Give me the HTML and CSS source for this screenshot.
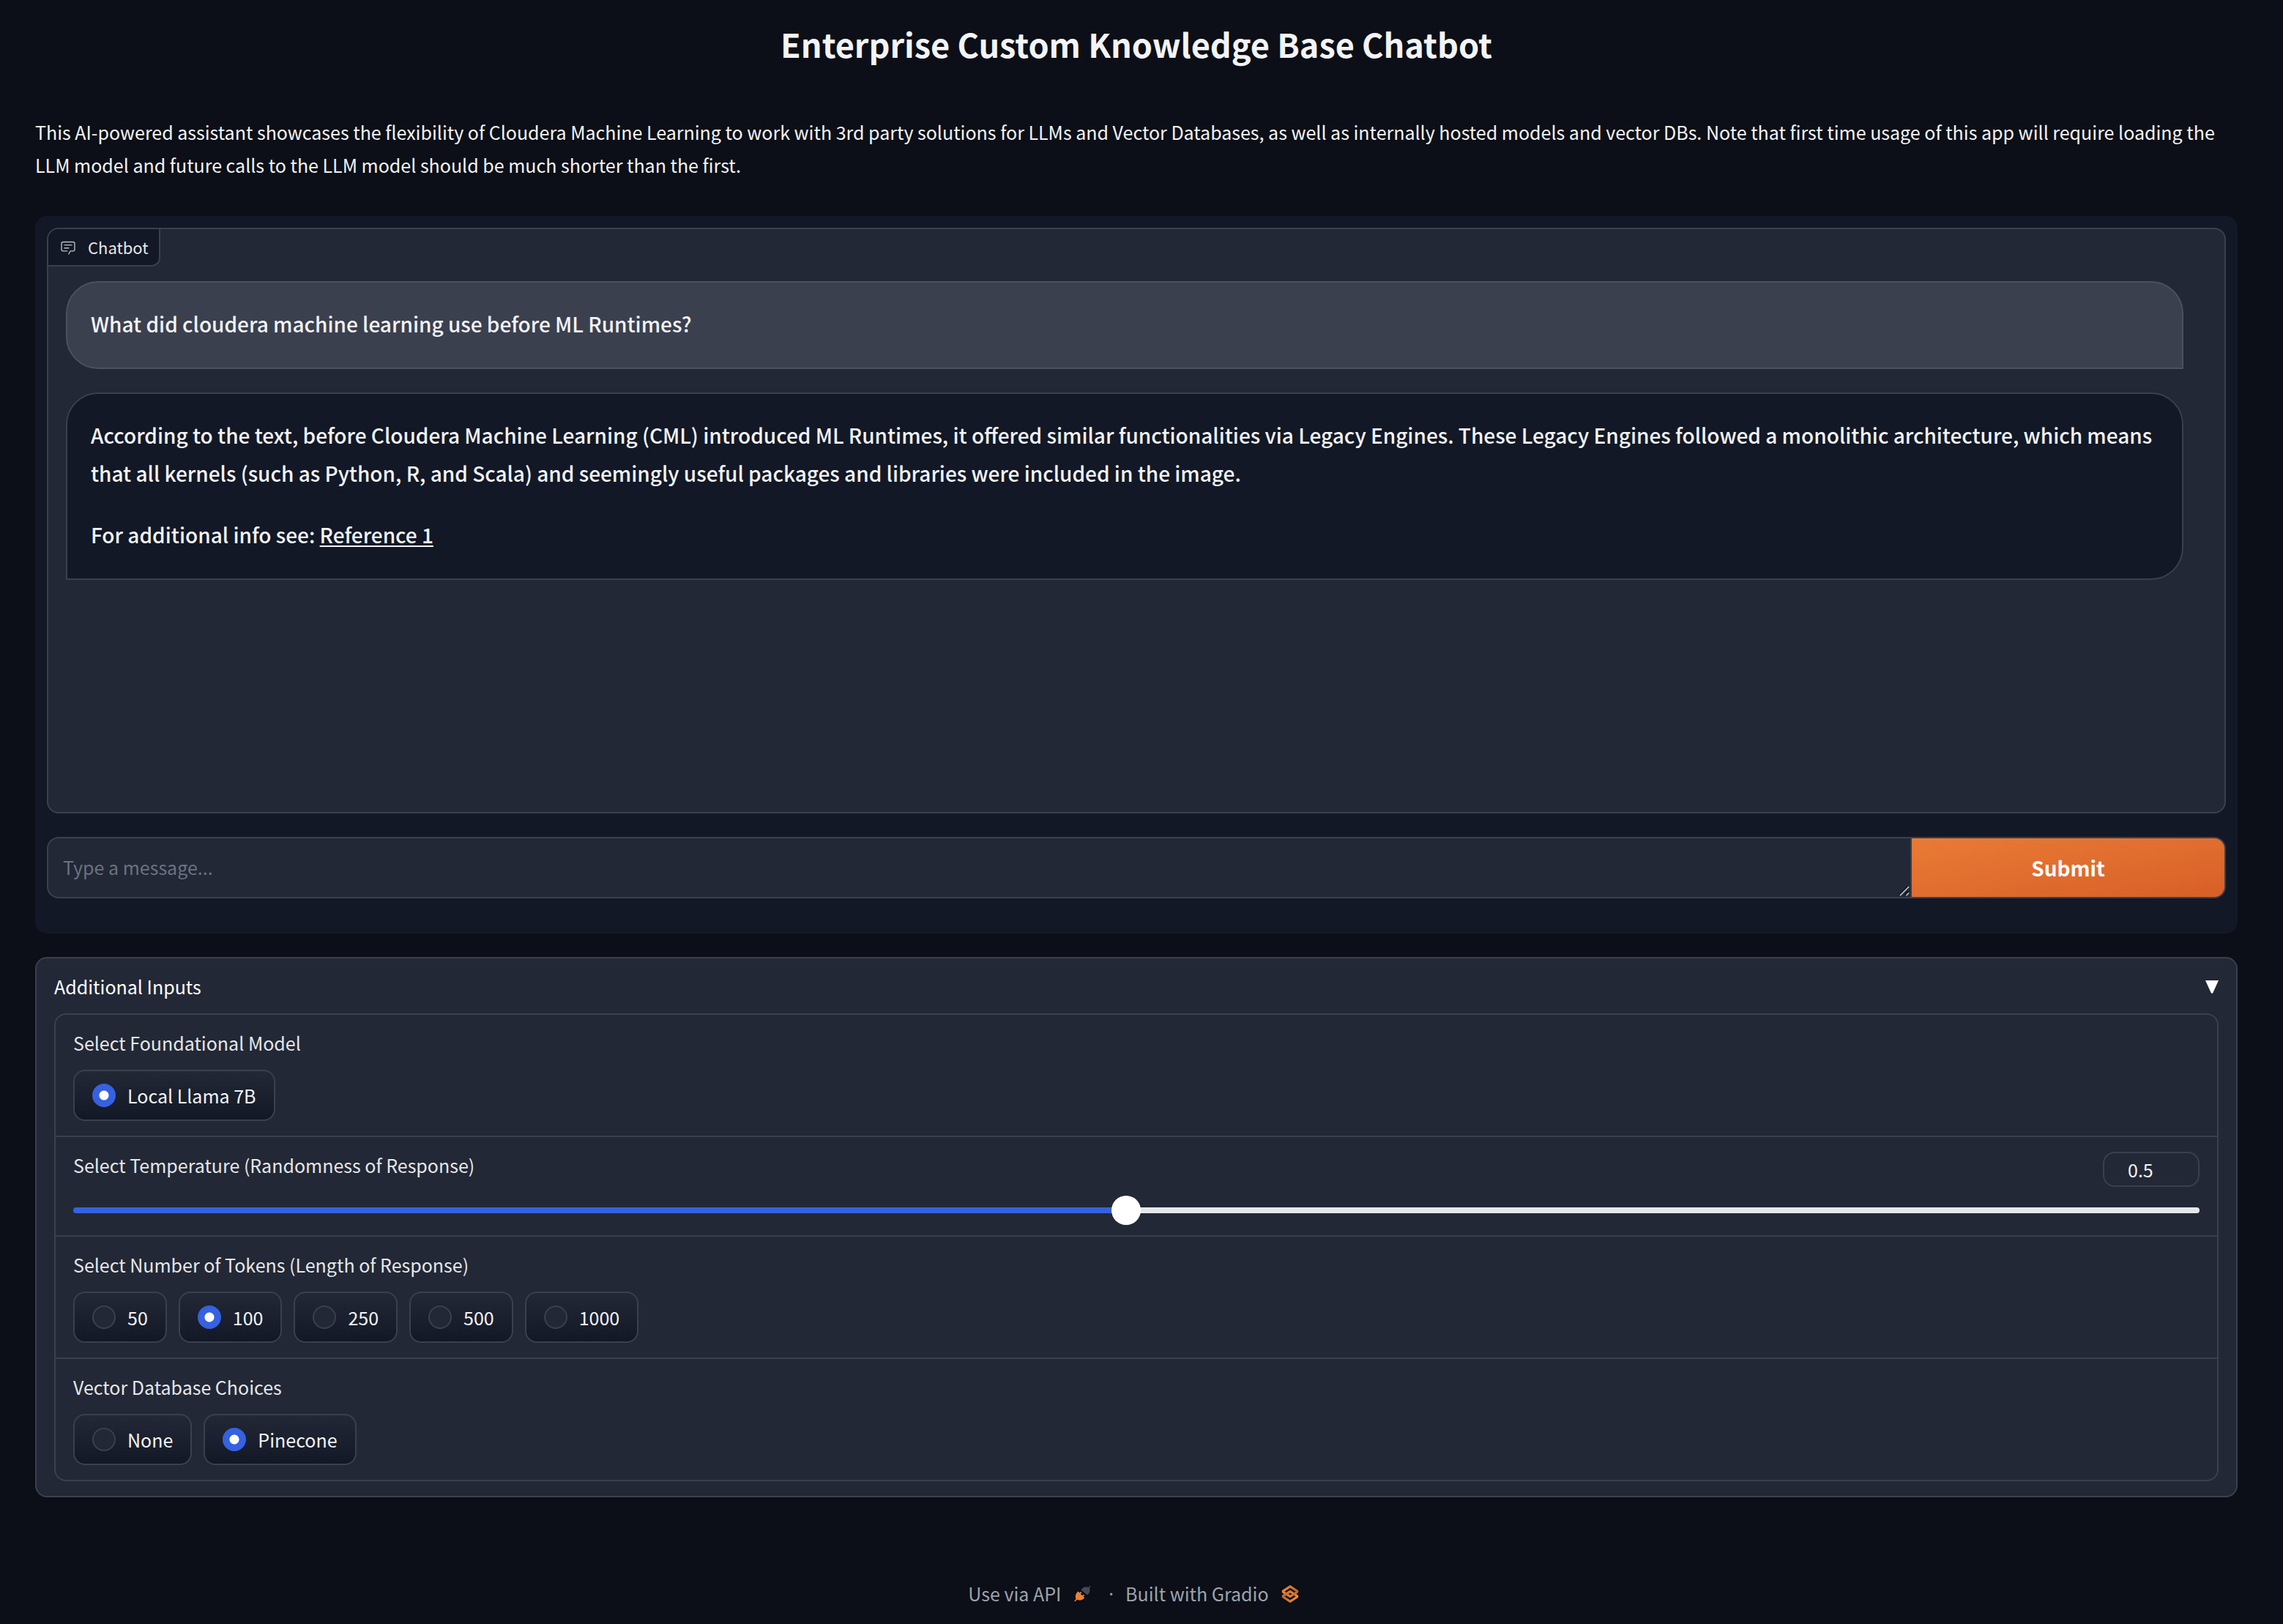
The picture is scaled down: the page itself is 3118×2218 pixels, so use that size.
FILE: index.html
```html
<!DOCTYPE html>
<html lang="en">
<head>
<meta charset="utf-8">
<meta name="viewport" content="width=device-width, initial-scale=1">
<title>Enterprise Custom Knowledge Base Chatbot</title>
<link rel="stylesheet" href="styles.css">
</head>
<body>
<main class="app">
  <h1 class="title">Enterprise Custom Knowledge Base Chatbot</h1>
  <p class="intro">This AI-powered assistant showcases the flexibility of Cloudera Machine Learning to work with 3rd party solutions for LLMs and Vector Databases, as well as internally hosted models and vector DBs. Note that first time usage of this app will require loading the LLM model and future calls to the LLM model should be much shorter than the first.</p>

  <section class="chat-panel">
    <div class="chatbot">
      <div class="block-label">
        <svg class="label-icon" viewBox="0 0 32 32" aria-hidden="true"><path fill="currentColor" d="M17.74 30L16 29l4-7h6a2 2 0 0 0 2-2V8a2 2 0 0 0-2-2H6a2 2 0 0 0-2 2v12a2 2 0 0 0 2 2h9v2H6a4 4 0 0 1-4-4V8a4 4 0 0 1 4-4h20a4 4 0 0 1 4 4v12a4 4 0 0 1-4 4h-4.84Z"/><path fill="currentColor" d="M8 10h16v2H8zm0 6h10v2H8z"/></svg>
        <span>Chatbot</span>
      </div>
      <div class="messages">
        <div class="message user"><p>What did cloudera machine learning use before ML Runtimes?</p></div>
        <div class="message bot">
          <p>According to the text, before Cloudera Machine Learning (CML) introduced ML Runtimes, it offered similar functionalities via Legacy Engines. These Legacy Engines followed a monolithic architecture, which means that all kernels (such as Python, R, and Scala) and seemingly useful packages and libraries were included in the image.</p>
          <p>For additional info see: <a href="#">Reference 1</a></p>
        </div>
      </div>
    </div>
    <form class="composer">
      <textarea class="composer-text" rows="1" placeholder="Type a message..." aria-label="Message"></textarea>
      <button class="submit" type="button">Submit</button>
    </form>
  </section>

  <section class="accordion">
    <button class="accordion-head" type="button" aria-expanded="true">
      <span>Additional Inputs</span>
      <svg class="caret" viewBox="0 0 18 18" aria-hidden="true"><path d="M0 0h18l-7.500 16.500q-1.500 2.500-3 0z" fill="#fff"/></svg>
    </button>
    <div class="fields">
      <fieldset class="field">
        <legend class="field-label">Select Foundational Model</legend>
        <div class="options">
          <label class="option"><input type="radio" name="model" checked><span>Local Llama 7B</span></label>
        </div>
      </fieldset>
      <div class="field">
        <div class="field-head">
          <label class="field-label" for="temperature">Select Temperature (Randomness of Response)</label>
          <input class="number" type="number" value="0.5" min="0.01" max="1" step="0.01" aria-label="Temperature value">
        </div>
        <input class="slider" id="temperature" type="range" value="0.5" min="0.01" max="1" step="0.01">
      </div>
      <fieldset class="field">
        <legend class="field-label">Select Number of Tokens (Length of Response)</legend>
        <div class="options">
          <label class="option"><input type="radio" name="tokens"><span>50</span></label>
          <label class="option"><input type="radio" name="tokens" checked><span>100</span></label>
          <label class="option"><input type="radio" name="tokens"><span>250</span></label>
          <label class="option"><input type="radio" name="tokens"><span>500</span></label>
          <label class="option"><input type="radio" name="tokens"><span>1000</span></label>
        </div>
      </fieldset>
      <fieldset class="field">
        <legend class="field-label">Vector Database Choices</legend>
        <div class="options">
          <label class="option"><input type="radio" name="vector"><span>None</span></label>
          <label class="option"><input type="radio" name="vector" checked><span>Pinecone</span></label>
        </div>
      </fieldset>
    </div>
  </section>
</main>

<footer class="footer">
  <a href="#">Use via API
    <svg class="foot-icon" viewBox="0 0 24 24" aria-hidden="true"><path fill="#434a59" d="M10.500 6.500c3-4.500 7-5 10-3.200l2-2.600 1 .8-1.600 2.800c1.200 3.500.2 7-2.900 9.200z"/><path fill="#ea8234" d="M6.500 8.500l2 2 1.500-1.700 1.300 1.300-1.500 1.800 2.400 2.400 1.800-1.500 1.200 1.300-1.600 1.600 1.600 1.600c-3 3.600-7.500 4-10.300 2.500l-2.700 2.700-1-.9 2.300-2.900c-1.500-3.500-.5-7.500 3-10.200z"/></svg>
  </a>
  <span class="dot">·</span>
  <a href="#">Built with Gradio
    <svg class="foot-icon" viewBox="57 86 461 404" preserveAspectRatio="none" fill="none" stroke-width="56" stroke-linejoin="bevel" aria-hidden="true">
      <defs>
        <linearGradient id="lower" gradientUnits="userSpaceOnUse" x1="60" y1="341" x2="430" y2="344"><stop stop-color="#b5642c"/><stop offset="1" stop-color="#ee8633"/></linearGradient>
        <linearGradient id="upper" gradientUnits="userSpaceOnUse" x1="514" y1="231" x2="144" y2="231"><stop stop-color="#b5642c"/><stop offset="1" stop-color="#ee8633"/></linearGradient>
      </defs>
      <path d="M287.500 229L86 344.500 287.500 460 489 344.500z" stroke="url(#lower)"/>
      <path d="M287.500 116L86 231.500 287.500 347 489 231.500z" stroke="url(#upper)"/>
      <path d="M86 344L288 229" stroke="url(#lower)"/>
    </svg>
  </a>
</footer>
</body>
</html>
```
FILE: styles.css
```css
:root {
  --bg: #0c0f17;
  --panel: #121826;
  --block: #222835;
  --line: #3a404d;
  --accent: #3661e0;
  --text: #f3f4f6;
  --label: #e5e7eb;
}

* { box-sizing: border-box; }

body {
  margin: 0;
  background: var(--bg);
  color: var(--text);
  font: 400 25px/45px "Noto Sans CJK SC", "Noto Sans", sans-serif;
}

button, input, textarea { font: inherit; color: inherit; }
p { margin: 0; }

.app {
  display: flex;
  flex-direction: column;
  gap: 32px;
  padding: 26px 62px 0 48px;
}

.title {
  margin: 0 0 32px;
  font-size: 45px;
  line-height: 68px;
  font-weight: 700;
  text-align: center;
}

.intro { margin-bottom: 15px; }

.chat-panel {
  display: flex;
  flex-direction: column;
  gap: 32px;
  padding: 16px 16px 48px;
  border-radius: 16px;
  background: var(--panel);
}

.chatbot {
  position: relative;
  height: 800px;
  border: 2px solid var(--line);
  border-radius: 16px;
  background: var(--block);
  overflow: hidden;
}

.block-label {
  position: absolute;
  top: 0;
  left: 0;
  display: flex;
  align-items: center;
  gap: 16px;
  height: 51px;
  padding: 0 14px 0 16px;
  border: solid var(--line);
  border-width: 0 2px 2px 0;
  border-bottom-right-radius: 12px;
  background: var(--panel);
  color: var(--label);
  font-size: 22px;
}

.label-icon { width: 22px; height: 22px; opacity: .8; }

.messages {
  display: flex;
  flex-direction: column;
  gap: 32px;
  padding: 71px 56px 24px 24px;
}

.message {
  display: flex;
  flex-direction: column;
  gap: 32px;
  padding: 30px 32px 34px;
  border: 2px solid var(--line);
  border-radius: 44px;
  font-size: 28px;
  font-weight: 500;
  line-height: 52px;
}

.message.user { background: #3b404f; border-color: #4b515e; border-bottom-right-radius: 0; }
.message.bot { background: var(--panel); border-bottom-left-radius: 0; }
.message a { color: inherit; text-underline-offset: 3px; }

.composer { display: flex; height: 84px; }

.composer-text {
  flex: 1;
  min-width: 0;
  padding: 17px 20px;
  border: 2px solid var(--line);
  border-right: 0;
  border-radius: 16px 0 0 16px;
  background: var(--block);
  line-height: 44px;
  resize: vertical;
  outline: 0;
}
.composer-text::placeholder { color: #6b7280; }
.composer-text::-webkit-resizer {
  background: url("data:image/svg+xml,%3Csvg xmlns='http://www.w3.org/2000/svg' viewBox='0 0 16 16' fill='none'%3E%3Cpath d='M0 13 13 0M8 13l5-5' stroke='%230b0e14' stroke-width='2'/%3E%3Cpath d='M1 14 14 1M10 14l4-4' stroke='%23b4b6ba' stroke-width='2'/%3E%3C/svg%3E") center / 100% 100% no-repeat;
}

.submit {
  width: 431px;
  border: 2px solid var(--line);
  border-radius: 0 16px 16px 0;
  background: linear-gradient(to bottom right, #e97b35, #d85f28);
  color: #fff;
  font-size: 28px;
  font-weight: 700;
}

.accordion {
  padding: 20px 24px;
  border: 2px solid var(--line);
  border-radius: 16px;
  background: var(--block);
}

.accordion-head {
  display: flex;
  justify-content: space-between;
  align-items: center;
  width: 100%;
  margin-bottom: 18px;
  padding: 0;
  border: 0;
  background: none;
  color: #fff;
  line-height: 37px;
}

.caret { width: 18px; height: 18px; }

.fields { border: 2px solid var(--line); border-radius: 16px; }

.field {
  min-width: 0;
  margin: 0;
  padding: 20px 24px;
  border: 0;
}
.field + .field { border-top: 2px solid var(--line); }

.field-label {
  float: left;
  width: 100%;
  padding: 0;
  color: var(--label);
  line-height: 37px;
}

.options { display: flex; gap: 16px; clear: both; padding-top: 18px; }

.option {
  display: flex;
  align-items: center;
  gap: 16px;
  height: 70px;
  padding: 0 24px;
  border: 2px solid var(--line);
  border-radius: 16px;
  background: linear-gradient(to bottom, var(--block), var(--panel));
}

.option input {
  appearance: none;
  width: 32px;
  height: 32px;
  margin: 0;
  border: 2px solid var(--line);
  border-radius: 50%;
  background: var(--block);
}
.option input:checked {
  border-color: var(--accent);
  background: radial-gradient(circle, #fff 6px, var(--accent) 7px);
}

.field-head { display: flex; justify-content: space-between; align-items: flex-start; }

.number {
  flex: none;
  width: 132px;
  height: 48px;
  padding: 0 32px;
  border: 2px solid var(--line);
  border-radius: 16px;
  background: var(--block);
  appearance: textfield;
}
.number::-webkit-inner-spin-button { display: none; }

.slider {
  display: block;
  appearance: none;
  width: 100%;
  height: 8px;
  margin: 28px 0 10px;
  border-radius: 4px;
  background: linear-gradient(to right, var(--accent) 49.5%, #e5e7eb 49.5%);
}
.slider::-webkit-slider-thumb {
  appearance: none;
  width: 40px;
  height: 40px;
  border-radius: 50%;
  background: #fff;
}

.footer {
  display: flex;
  justify-content: center;
  gap: 16px;
  padding: 109px 70px 20px 48px;
  color: #9ca3af;
}
.footer a {
  display: flex;
  align-items: center;
  gap: 17px;
  color: inherit;
  text-decoration: none;
}
.dot { margin-left: 8px; font-family: "Noto Sans", sans-serif; }
.foot-icon { width: 24px; height: 24px; }
```
